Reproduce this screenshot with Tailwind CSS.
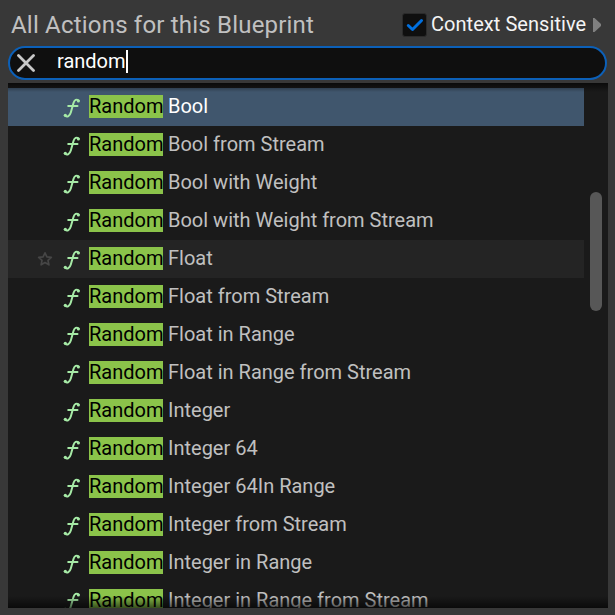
<!DOCTYPE html>
<html lang="en">
<head>
<meta charset="utf-8">
<title>All Actions for this Blueprint</title>
<script src="https://cdn.jsdelivr.net/npm/@tailwindcss/browser@4"></script>
</head>
<body class="w-[615px] h-[615px] overflow-hidden bg-[#383838] font-[Roboto,sans-serif] flex flex-col px-[8px]">
<svg class="hidden">
  <symbol id="fn" viewBox="0 0 18 20"><path d="M15.600 2.500C13.600 .8 11.400 1.800 10.500 5L7.800 14.500C6.800 18 4.200 19.300 2.300 17.800M5.200 8H14.500" fill="none" stroke="#a6eaa6" stroke-width="2" stroke-linecap="round"/><circle cx="15.400" cy="2.900" r="1.500" fill="#a6eaa6"/><circle cx="2.300" cy="17.300" r="1.600" fill="#a6eaa6"/></symbol>
</svg>
<header class="h-[46px] shrink-0 flex items-center pt-[3px] whitespace-nowrap">
  <h1 class="w-[394px] shrink-0 pl-[3px] text-[24px] leading-[30px] tracking-[0.2px] text-[#c0c0c0]">All Actions for this Blueprint</h1>
  <span class="w-[25px] h-[24px] rounded-[3px] bg-[#0f0f0f] border border-[#2b2b2b] flex items-center justify-center shrink-0">
    <svg width="18" height="14" viewBox="0 0 18 14" fill="none" stroke="#0070e0" stroke-width="3" stroke-linecap="round" stroke-linejoin="round"><path d="M2.300 7.500L6.500 11.500L15.500 2.500"/></svg>
  </span>
  <span class="ml-[4px] mb-[2px] w-[162px] shrink-0 text-[20px] leading-[26px] tracking-[0.05px] text-[#f4f4f4]">Context Sensitive</span>
  <svg class="shrink-0" width="9" height="14" viewBox="0 0 9 14"><path d="M0 0H1.500L8 6V8L1.500 14H0Z" fill="#808080"/></svg>
</header>
<div class="h-[34px] shrink-0 rounded-full border-2 border-[#0c60b8] bg-[#0f0f0f] flex items-center">
  <svg class="ml-[7px] shrink-0" width="18" height="18" viewBox="0 0 18 18" stroke="#c8c8c8" stroke-width="2.800" stroke-linecap="round"><path d="M1.500 1.500L16.500 16.500M16.500 1.500L1.500 16.500"/></svg>
  <span class="ml-[22px] mb-[4px] text-[20px] leading-[24px] text-white">random</span>
  <span class="w-[2px] h-[23px] mb-[3px] bg-white"></span>
</div>
<main class="relative mt-[3px] w-[600px] h-[525px] shrink-0 overflow-hidden bg-[#1a1a1a] pt-[5px]">
  <ul id="list" class="w-[576px] text-[20px] leading-[23px] text-[#c0c0c0] whitespace-nowrap"></ul>
  <div class="absolute left-[582px] top-[109px] w-[12px] h-[119px] rounded-full bg-[#575757]"></div>
  <div class="absolute inset-x-0 top-0 h-[9px] bg-linear-to-b from-black/60 to-transparent"></div>
  <div class="absolute inset-x-0 bottom-0 h-[12px] bg-linear-to-t from-black/60 to-transparent"></div>
</main>
<script>
const names = ["Bool","Bool from Stream","Bool with Weight","Bool with Weight from Stream","Float","Float from Stream","Float in Range","Float in Range from Stream","Integer","Integer 64","Integer 64In Range","Integer from Stream","Integer in Range","Integer in Range from Stream"];
const star = '<svg width="16" height="16" viewBox="0 0 16 16" fill="none" stroke="#464646" stroke-width="1.7" stroke-linejoin="round"><path d="M8 1.800L9.900 5.900L14.300 6.400L11 9.400L11.900 13.800L8 11.600L4.100 13.800L5 9.400L1.700 6.400L6.100 5.900Z"/></svg>';
document.getElementById("list").innerHTML = names.map((n, i) => `
<li class="h-[38px] flex items-center ${i === 0 ? 'bg-[#40566d] text-white' : i === 4 ? 'bg-[#242424]' : ''}">
  <span class="ml-[29px] w-[26px] shrink-0">${i === 4 ? star : ''}</span>
  <svg class="w-[18px] h-[20px] mt-[2px] mr-[8px] shrink-0"><use href="#fn"/></svg>
  <span class="w-[74px] h-[23px] bg-[#8bc34a] text-black mb-px shrink-0">Random</span>
  <span class="ml-[5px] mb-px">${n}</span>
</li>`).join("");
</script>
</body>
</html>
